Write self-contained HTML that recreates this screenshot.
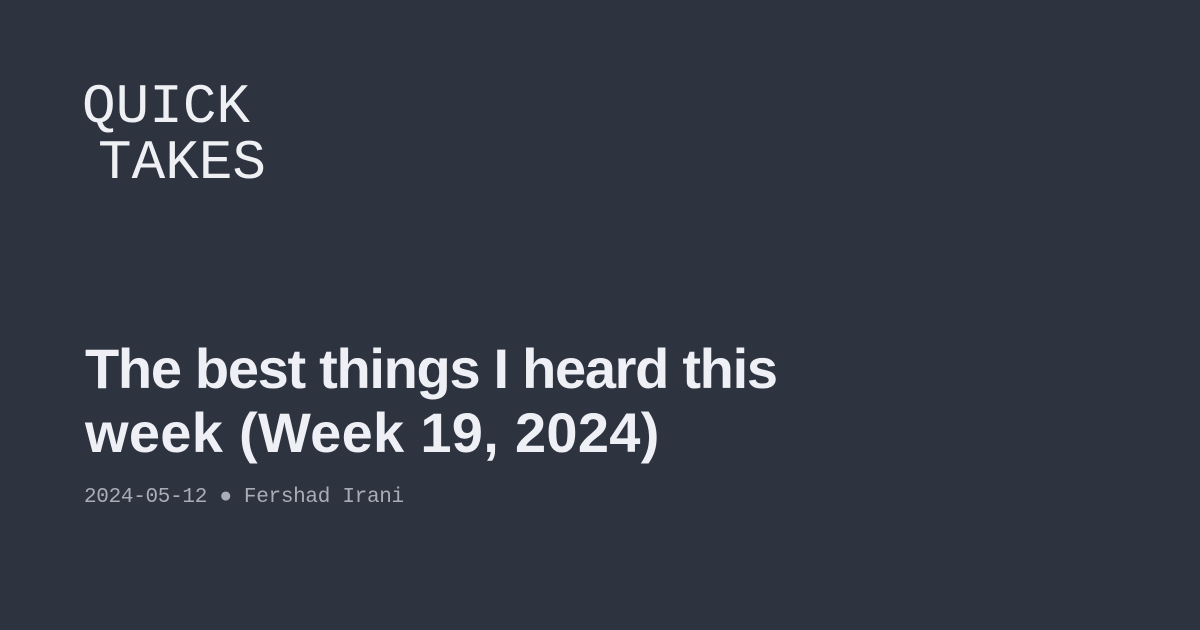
<!DOCTYPE html>
<html><head><style>
html,body{margin:0;padding:0;}
body{width:1200px;height:630px;background:#2e3340;position:relative;overflow:hidden;}
.logo{position:absolute;left:82px;top:79px;font-family:"Liberation Mono",monospace;font-size:56px;line-height:56px;color:#eef0f4;white-space:pre;}
.logo .l2{padding-left:16px;}
.title{position:absolute;left:85px;top:337px;font-family:"Liberation Sans",sans-serif;font-weight:bold;font-size:56px;line-height:64px;color:#eef0f5;width:1000px;white-space:nowrap;}
.t1{letter-spacing:-1.3px;}
.t2{letter-spacing:0.3px;}
.meta{position:absolute;left:84px;top:486px;font-family:"Liberation Mono",monospace;font-size:21px;color:#a9adb6;white-space:pre;letter-spacing:-0.3px;}
</style></head><body>
<div class="logo"><div>QUICK</div><div class="l2">TAKES</div></div>
<div class="title"><div class="t1">The best things I heard this</div><div class="t2">week (Week 19, 2024)</div></div>
<div class="meta">2024-05-12 ● Fershad Irani</div>
</body></html>
